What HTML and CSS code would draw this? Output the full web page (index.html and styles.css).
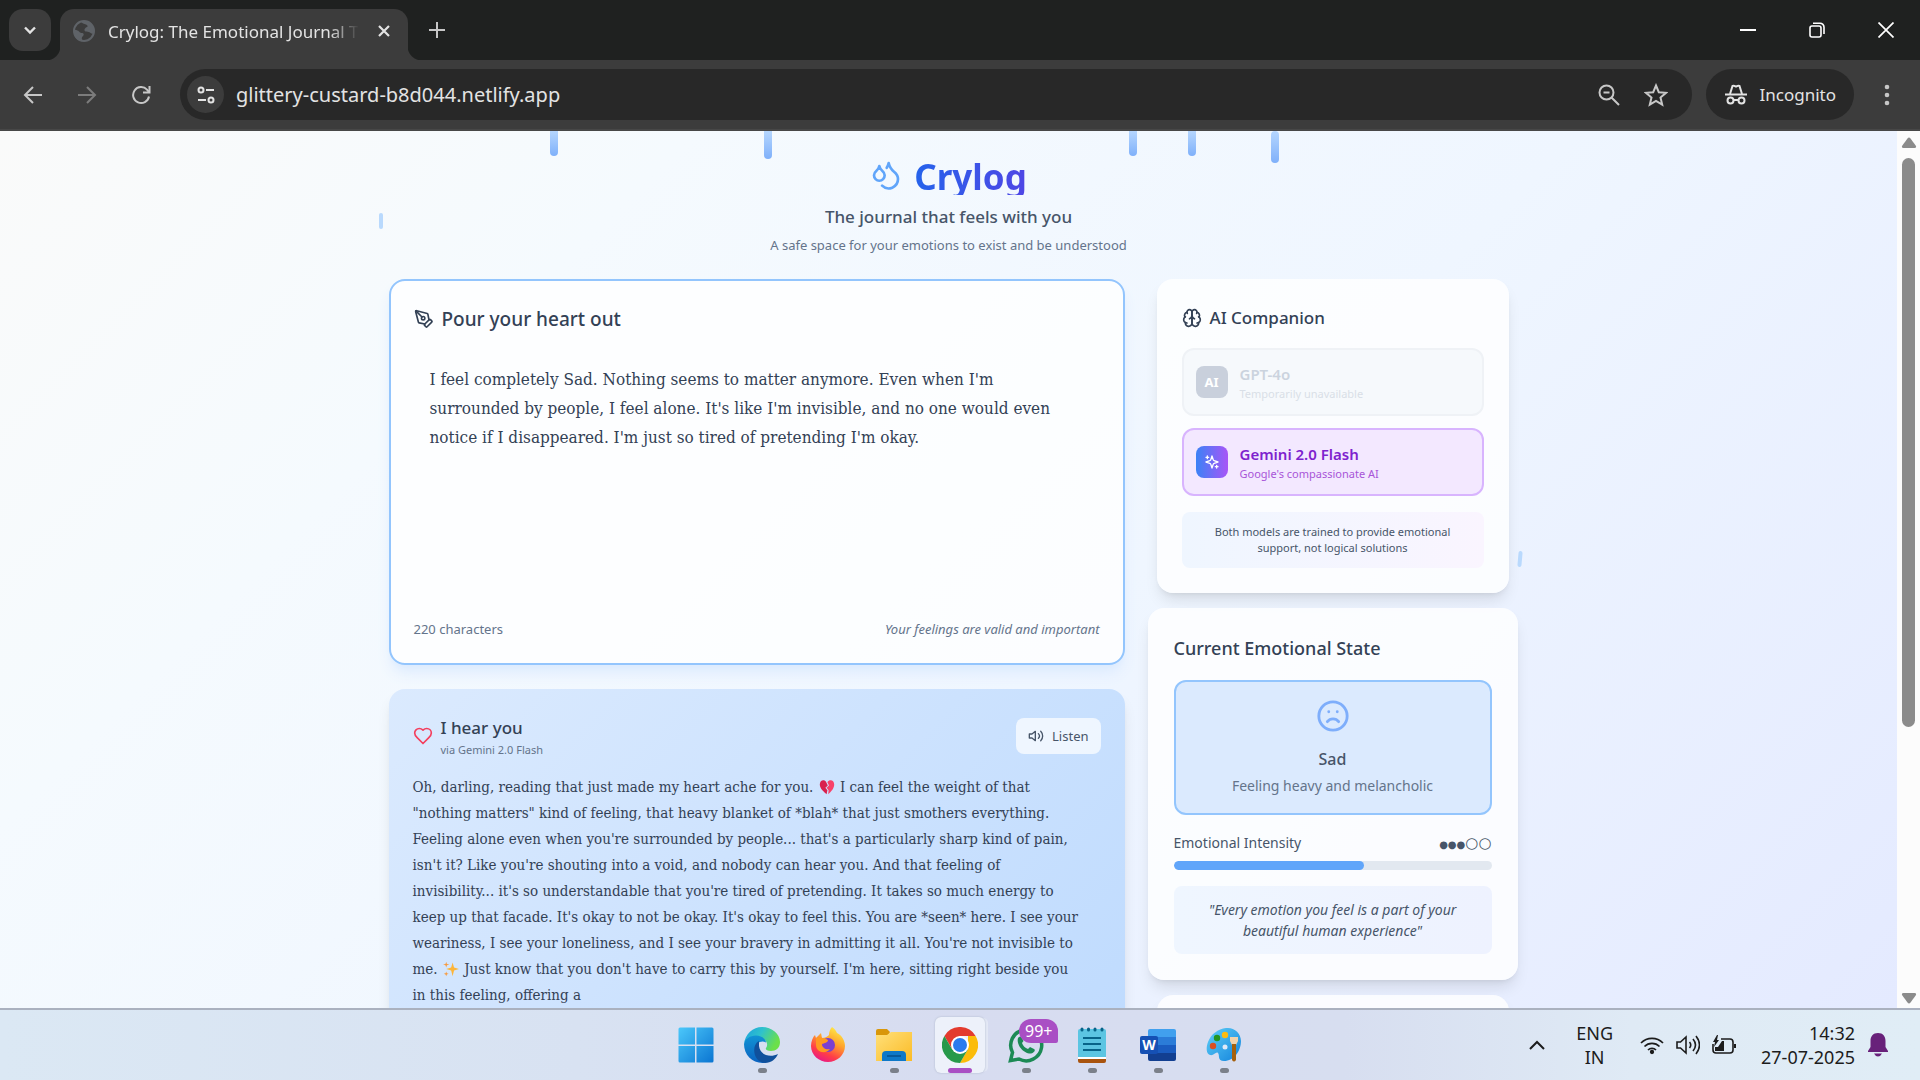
FILE: index.html
```html
<!DOCTYPE html>
<html lang="en">
<head>
    <meta charset="UTF-8">
    <meta name="viewport" content="width=device-width, initial-scale=1.0">
    <title>Crylog: The Emotional Journal That Feels With You</title>
    <link rel="stylesheet" href="styles.css">
</head>
<body>
    <!-- Browser window -->
    <div class="tab-strip">
        <button class="tab-search" aria-label="Search tabs">
            <svg width="16" height="16" viewBox="0 0 16 16" fill="none" stroke="#e3e3e3" stroke-width="2.4"><path d="M3 5.5l5 5 5-5"/></svg>
        </button>
        <div class="tab">
            <svg class="globe" width="22" height="22" viewBox="0 0 22 22"><circle cx="11" cy="11" r="10" fill="#3c3c3c" stroke="#5f6368" stroke-width="2"/><path d="M2 10c2 0 3 .5 4 1.500 1 1.500 2 1.500 3.500 1.500 1.500.5 1.500 2 .5 3-1 .8-1.500 2-1 3.500l.5 2C4 21 0 16 1 10zM8 1.500c5-1.500 11 1 13 7l-.5 5c-2 1-3-1-4.500-1.500-2-.5-4 0-4.500-1.500s1-3 2.500-3.500c1.500-.8 0-2-1-2.500C11 3.500 9 3.500 8 1.500z" fill="#5f6368"/></svg>
            <span class="tab-title">Crylog: The Emotional Journal That Feels</span>
            <button class="tab-close" aria-label="Close tab">
                <svg width="14" height="14" viewBox="0 0 14 14" stroke="#e3e3e3" stroke-width="2.2"><path d="M2 2l10 10M12 2L2 12"/></svg>
            </button>
        </div>
        <button class="new-tab" aria-label="New tab">
            <svg width="18" height="18" viewBox="0 0 18 18" stroke="#c7c7c7" stroke-width="2"><path d="M9 1v16M1 9h16"/></svg>
        </button>
        <div class="window-buttons">
            <button aria-label="Minimize"><svg width="16" height="16" viewBox="0 0 16 16" stroke="#fff" stroke-width="2"><path d="M0 8h16"/></svg></button>
            <button aria-label="Restore"><svg width="16" height="16" viewBox="0 0 16 16" fill="none" stroke="#fff" stroke-width="1.6"><rect x="1" y="4" width="11" height="11" rx="2"/><path d="M4 1.2h7a4 4 0 0 1 4 4V12"/></svg></button>
            <button aria-label="Close"><svg width="16" height="16" viewBox="0 0 16 16" stroke="#fff" stroke-width="1.7"><path d="M.5.5l15 15M15.5.5l-15 15"/></svg></button>
        </div>
    </div>

    <div class="toolbar">
        <button class="nav-btn" aria-label="Back"><svg width="20" height="20" viewBox="0 0 20 20" fill="none" stroke="#c7c7c7" stroke-width="2"><path d="M19 10H2M10 2l-8 8 8 8"/></svg></button>
        <button class="nav-btn" aria-label="Forward"><svg width="20" height="20" viewBox="0 0 20 20" fill="none" stroke="#7c7c7c" stroke-width="2"><path d="M1 10h17M10 2l8 8-8 8"/></svg></button>
        <button class="nav-btn" aria-label="Reload"><svg width="20" height="20" viewBox="0 0 20 20" fill="none" stroke="#c7c7c7" stroke-width="2"><path d="M18 11.5A8 8 0 1 1 16 4.6L18 7"/><path d="M18.5 1v6.500H12"/></svg></button>
        <div class="omnibox">
            <button class="site-info" aria-label="Site information">
                <svg width="20" height="20" viewBox="0 0 20 20" fill="none" stroke="#e3e3e3" stroke-width="2"><circle cx="5" cy="5" r="2.5"/><path d="M10 5h8M2 15h8"/><circle cx="15" cy="15" r="2.5"/></svg>
            </button>
            <input type="text" class="url" aria-label="Address" value="glittery-custard-b8d044.netlify.app">
            <button class="omni-btn" aria-label="Zoom"><svg width="22" height="22" viewBox="0 0 22 22" fill="none" stroke="#c7c7c7" stroke-width="2"><circle cx="8.5" cy="8.5" r="7"/><path d="M13.5 13.5l7.500 7.500M5.500 8.500h6"/></svg></button>
            <button class="omni-btn" aria-label="Bookmark"><svg width="24" height="24" viewBox="0 0 24 24" fill="none" stroke="#c7c7c7" stroke-width="2"><path d="M12 2.500l2.800 6.700 7.200.6-5.500 4.700 1.700 7.100L12 17.800l-6.200 3.800 1.700-7.100L2 9.800l7.200-.6z"/></svg></button>
        </div>
        <button class="incognito">
            <svg width="22" height="22" viewBox="0 0 22 22" fill="none" stroke="#e3e3e3" stroke-width="2"><path d="M0 10.500h22"/><path d="M5 10l2.500-8c2-1 2.500.5 3.500.5s1.500-1.500 3.500-.5L17 10"/><circle cx="5.500" cy="16.500" r="3"/><circle cx="16.500" cy="16.500" r="3"/><path d="M8.500 16h5"/></svg>
            <span>Incognito</span>
        </button>
        <button class="menu-btn" aria-label="Menu"><svg width="6" height="22" viewBox="0 0 6 22" fill="#c7c7c7"><circle cx="3" cy="3" r="2.3"/><circle cx="3" cy="11" r="2.3"/><circle cx="3" cy="19" r="2.3"/></svg></button>
    </div>

    <!-- Page -->
    <div class="viewport">
        <div class="page">
            <div class="rain">
                <span class="drop drop-1"></span>
                <span class="drop drop-2"></span>
                <span class="drop drop-3"></span>
                <span class="drop drop-4"></span>
                <span class="drop drop-5"></span>
                <span class="tear tear-1"></span>
                <span class="tear tear-2"></span>
            </div>

            <header class="hero">
                <div class="logo">
                    <svg class="icon" width="32" height="32" viewBox="0 0 24 24"><path d="M7 16.3c2.2 0 4-1.83 4-4.05 0-1.16-.57-2.26-1.71-3.19S7.29 6.75 7 5.3c-.29 1.45-1.14 2.84-2.29 3.76S3 11.1 3 12.25c0 2.22 1.8 4.05 4 4.05z"/><path d="M12.56 6.6A10.97 10.97 0 0 0 14 3.02c.5 2.5 2 4.9 4 6.5s3 3.5 3 5.5a6.98 6.98 0 0 1-11.91 4.97"/></svg>
                    <h1>Crylog</h1>
                </div>
                <p class="subtitle">The journal that feels with you</p>
                <p class="tagline">A safe space for your emotions to exist and be understood</p>
            </header>

            <div class="layout">
                <main class="main-col">
                    <section class="card journal">
                        <label class="card-title title-lg" for="entry">
                            <svg class="icon" width="20" height="20" viewBox="0 0 24 24"><path d="M15.707 21.293a1 1 0 0 1-1.414 0l-1.586-1.586a1 1 0 0 1 0-1.414l5.586-5.586a1 1 0 0 1 1.414 0l1.586 1.586a1 1 0 0 1 0 1.414z"/><path d="m18 13-1.375-6.874a1 1 0 0 0-.746-.776L3.235 2.028a1 1 0 0 0-1.207 1.207L5.35 15.879a1 1 0 0 0 .776.746L13 18"/><path d="m2.3 2.3 7.286 7.286"/><circle cx="11" cy="11" r="2"/></svg>
                            Pour your heart out
                        </label>
                        <textarea id="entry">I feel completely Sad. Nothing seems to matter anymore. Even when I'm surrounded by people, I feel alone. It's like I'm invisible, and no one would even notice if I disappeared. I'm just so tired of pretending I'm okay.</textarea>
                        <div class="journal-foot">
                            <span>220 characters</span>
                            <em>Your feelings are valid and important</em>
                        </div>
                    </section>

                    <section class="card reply">
                        <div class="reply-head">
                            <svg class="icon heart" width="20" height="20" viewBox="0 0 24 24"><path d="M19 14c1.49-1.46 3-3.21 3-5.5A5.5 5.5 0 0 0 16.5 3c-1.76 0-3 .5-4.5 2-1.5-1.5-2.74-2-4.5-2A5.5 5.5 0 0 0 2 8.5c0 2.3 1.5 4.05 3 5.5l7 7Z"/></svg>
                            <div>
                                <h2>I hear you</h2>
                                <p>via Gemini 2.0 Flash</p>
                            </div>
                            <button class="listen">
                                <svg class="icon" width="16" height="16" viewBox="0 0 24 24"><path d="M11 5 6 9H2v6h4l5 4z"/><path d="M15.54 8.46a5 5 0 0 1 0 7.07"/><path d="M19.07 4.93a10 10 0 0 1 0 14.14"/></svg>
                                Listen
                            </button>
                        </div>
                        <p class="reply-text">Oh, darling, reading that just made my heart ache for you. <svg class="emoji" viewBox="0 0 20 20"><path d="M9 4C7 0 1 1 1 7c0 5 5 9 8.500 12l1-5-2.500-3 3-3z" fill="#d9214e"/><path d="M10.500 4C13 0 19 1 19 7c0 5-4 9-7.500 12l.5-5-2.500-3 3-3z" fill="#f8426a"/></svg> I can feel the weight of that "nothing matters" kind of feeling, that heavy blanket of *blah* that just smothers everything. Feeling alone even when you're surrounded by people... that's a particularly sharp kind of pain, isn't it? Like you're shouting into a void, and nobody can hear you. And that feeling of invisibility... it's so understandable that you're tired of pretending. It takes so much energy to keep up that facade. It's okay to not be okay. It's okay to feel this. You are *seen* here. I see your weariness, I see your loneliness, and I see your bravery in admitting it all. You're not invisible to me. <svg class="emoji" viewBox="0 0 20 20"><path d="M12 2l1.800 6.200L20 10l-6.200 1.800L12 19l-1.800-7.200L4 10l6.200-1.800z" fill="#fcb53a"/><path d="M4 1l.9 2.600L8 4.500l-3.100.9L4 8l-.9-2.600L0 4.500l3.100-.9zM4 13l.8 2.200L7 16l-2.200.8L4 19l-.8-2.200L1 16l2.200-.8z" fill="#f79a3e"/></svg> Just know that you don't have to carry this by yourself. I'm here, sitting right beside you in this feeling, offering a</p>
                    </section>
                </main>

                <aside class="side-col">
                    <section class="card">
                        <h2 class="card-title">
                            <svg class="icon" width="20" height="20" viewBox="0 0 24 24"><path d="M12 5a3 3 0 1 0-5.997.125 4 4 0 0 0-2.526 5.77 4 4 0 0 0 .556 6.588A4 4 0 1 0 12 18Z"/><path d="M12 5a3 3 0 1 1 5.997.125 4 4 0 0 1 2.526 5.77 4 4 0 0 1-.556 6.588A4 4 0 1 1 12 18Z"/><path d="M15 13a4.5 4.5 0 0 1-3-4 4.5 4.5 0 0 1-3 4"/><path d="M17.599 6.5a3 3 0 0 0 .399-1.375M6.003 5.125A3 3 0 0 0 6.401 6.5M3.477 10.896a4 4 0 0 1 .585-.396M19.938 10.5a4 4 0 0 1 .585.396M6 18a4 4 0 0 1-1.967-.516M19.967 17.484A4 4 0 0 1 18 18"/></svg>
                            AI Companion
                        </h2>
                        <div class="models">
                            <button class="model model-off" disabled>
                                <span class="tile">AI</span>
                                <span class="model-text"><strong>GPT-4o</strong><small>Temporarily unavailable</small></span>
                            </button>
                            <button class="model model-on">
                                <span class="tile"><svg class="icon" width="16" height="16" viewBox="0 0 24 24"><path d="m12 3-1.912 5.813a2 2 0 0 1-1.275 1.275L3 12l5.813 1.912a2 2 0 0 1 1.275 1.275L12 21l1.912-5.813a2 2 0 0 1 1.275-1.275L21 12l-5.813-1.912a2 2 0 0 1-1.275-1.275L12 3Z"/><path d="M5 3v4M19 17v4M3 5h4M17 19h4"/></svg></span>
                                <span class="model-text"><strong>Gemini 2.0 Flash</strong><small>Google's compassionate AI</small></span>
                            </button>
                        </div>
                        <p class="note">Both models are trained to provide emotional support, not logical solutions</p>
                    </section>

                    <section class="card mood-card">
                        <h2 class="card-title">Current Emotional State</h2>
                        <div class="mood">
                            <svg class="icon" width="34" height="34" viewBox="0 0 24 24"><circle cx="12" cy="12" r="10"/><path d="M16 16s-1.5-2-4-2-4 2-4 2M9 9h.01M15 9h.01"/></svg>
                            <h3>Sad</h3>
                            <p>Feeling heavy and melancholic</p>
                        </div>
                        <div class="intensity">
                            <span>Emotional Intensity</span>
                            <span class="dots"><span class="dots-on">●●●</span>○○</span>
                        </div>
                        <div class="bar"><div class="bar-fill" style="width: 60%"></div></div>
                        <p class="quote">"Every emotion you feel is a part of your beautiful human experience"</p>
                    </section>

                    <section class="card next-card"></section>
                </aside>
            </div>
        </div>
        <div class="scrollbar">
            <svg width="16" height="12" viewBox="0 0 16 12" fill="#8b8b8b"><path d="M6.500 1.500q1.500-2 3 0L15 9q.5 2-1.500 2h-11Q.5 11 1 9z"/></svg>
            <div class="scroll-track"><div class="thumb"></div></div>
            <svg width="16" height="12" viewBox="0 0 16 12" fill="#8b8b8b"><path d="M6.500 10.500q1.500 2 3 0L15 3q.5-2-1.500-2h-11Q.5 1 1 3z"/></svg>
        </div>
    </div>

    <!-- Taskbar -->
    <footer class="taskbar">
        <div class="apps">
            <button class="app" aria-label="Start">
                <svg width="36" height="36" viewBox="0 0 36 36"><defs><linearGradient id="win" gradientUnits="userSpaceOnUse" x1="0" y1="0" x2="36" y2="36"><stop offset="0" stop-color="#4cc9fb"/><stop offset="1" stop-color="#0a74d1"/></linearGradient></defs><path fill="url(#win)" d="M2 .5h15v17H.5V2Q.5.5 2 .5zM18.500.5H34q1.500 0 1.500 1.500v15.500h-17zM.5 19H17v16.500H2Q.5 35.500.5 34zM18.500 19h17v15q0 1.500-1.500 1.500H18.500z"/></svg>
            </button>
            <button class="app running" aria-label="Edge">
                <svg width="36" height="36" viewBox="0 0 36 36"><defs><linearGradient id="edge-a" x1="0" y1="0" x2="1" y2=".4"><stop offset="0" stop-color="#1a9fe0"/><stop offset=".5" stop-color="#2fc2cc"/><stop offset="1" stop-color="#6be04a"/></linearGradient><linearGradient id="edge-b" x1="0" y1="0" x2="0" y2="1"><stop offset="0" stop-color="#1193d4"/><stop offset="1" stop-color="#0b62c0"/></linearGradient></defs><path fill="url(#edge-a)" d="M0 17C1 7 9 0 18 0c10 0 18 7 18 15 0 6-4 9-9 9-4 0-6-1.500-5-3 3-4 0-10-8-11C7 9.500 1 13 0 17z"/><path fill="url(#edge-b)" d="M0 17c1-5 6-8.500 12-8.500 6 0 10 4 10 7-6-3-12 2-10 9 1 6 6 11 11 11C10 38 0 29 0 17z"/><path fill="#10509c" d="M15 14c-8 4-6 21 6 22 6 0 11-4 13-9-8 4-18 1-19-8z"/></svg>
            </button>
            <button class="app" aria-label="Firefox">
                <svg width="36" height="36" viewBox="0 0 36 36"><defs><linearGradient id="fox" x1=".8" y1="0" x2=".3" y2="1"><stop offset="0" stop-color="#fff24a"/><stop offset=".4" stop-color="#ffa42c"/><stop offset=".75" stop-color="#ff3e47"/><stop offset="1" stop-color="#e8178a"/></linearGradient></defs><path fill="url(#fox)" d="M22 0c3 2 4 4 5 6 5 2 8 8 8 13 0 9-8 16-17 16S1 28 1 19c0-5 2-9 4-11l1 3 5-5 1 5c3 0 5-1 7-3 0-3 1-6 3-8z"/><circle cx="18" cy="18" r="7" fill="#7b3fd0"/><path fill="#ff9a20" d="M6 11c4-1 9 0 12 2 0 3-4 3-6 4 0 4 4 6 8 5-5 6-14 3-14-4z"/></svg>
            </button>
            <button class="app running" aria-label="File Explorer">
                <svg width="36" height="36" viewBox="0 0 36 36"><path fill="#d9970a" d="M0 4q0-2 2-2h9l3 3-3 5H0z"/><defs><linearGradient id="folder" x1="0" y1="0" x2="1" y2="1"><stop offset="0" stop-color="#ffe07a"/><stop offset="1" stop-color="#fbbb26"/></linearGradient></defs><path fill="url(#folder)" d="M0 8h11l4-3h21v29H0z"/><path fill="#0e78c8" d="M6 34V28q0-4 4-4h16q4 0 4 4v6z"/><path stroke="#064f8c" stroke-width="1.5" d="M11 29h14"/></svg>
            </button>
            <button class="app active" aria-label="Chrome">
                <svg width="36" height="36" viewBox="0 0 36 36"><path fill="#e33b2e" d="M2.400 9a18 18 0 0 1 31.200 0H18l-6 3-2 10z"/><path fill="#fbbc0a" d="M33.600 9A18 18 0 0 1 18 36l8-14V9z"/><path fill="#26994a" d="M2.400 9A18 18 0 0 0 18 36l7.800-13.500H10.200z"/><circle cx="18" cy="18" r="9" fill="#fff"/><circle cx="18" cy="18" r="7" fill="#2a7bee"/></svg>
            </button>
            <button class="app running" aria-label="WhatsApp">
                <svg width="36" height="36" viewBox="0 0 36 36"><path fill="none" stroke="#1c8a55" stroke-width="3.5" d="M2.500 33.500l2-8a15.500 15.500 0 1 1 6.500 6.500z"/><path fill="#1c8a55" d="M10 11c2-2 3-2 4 0l1.500 3-1.500 2c1 3 3 5 6 6l2-2 4 2c2 1 0 4-3 4.500C16 27 8 18 10 11z"/></svg>
                <span class="badge">99+</span>
            </button>
            <button class="app running" aria-label="Notepad">
                <svg width="36" height="36" viewBox="0 0 36 36"><path fill="#a9540f" d="M4 32h28v2q0 2-2 2H6q-2 0-2-2z"/><path fill="#fff" d="M4 29h28v3H4z"/><path fill="#5cc5e2" d="M6 2h24q2 0 2 2v26H4V4q0-2 2-2z"/><path stroke="#086489" stroke-width="2" d="M9 11h18M9 17h18M9 23h18"/><path stroke="#086489" stroke-width="3" stroke-linecap="round" d="M8 2v1M14.500 2v1M21 2v1M28 2v1"/></svg>
            </button>
            <button class="app running" aria-label="Word">
                <svg width="36" height="36" viewBox="0 0 36 36"><path fill="#41a0ee" d="M10 2h24q2 0 2 2v6H8V4q0-2 2-2z"/><path fill="#2b7cd8" d="M8 10h28v8H8z"/><path fill="#1a5cc0" d="M8 18h28v8H8z"/><path fill="#123f91" d="M8 26h28v6q0 2-2 2H10q-2 0-2-2z"/><rect y="9" width="18" height="18" rx="2" fill="#1550b4"/><text x="9" y="23" text-anchor="middle" class="word-w">W</text></svg>
            </button>
            <button class="app running" aria-label="Paint">
                <svg width="36" height="36" viewBox="0 0 36 36"><defs><linearGradient id="paint" x1="0" y1="0" x2="1" y2="1"><stop offset="0" stop-color="#5fd0f8"/><stop offset="1" stop-color="#1383dc"/></linearGradient></defs><path fill="url(#paint)" d="M20 1c8-1 15 5 15 13 0 10-7 20-17 20-7 0-4-6-6-8s-4 3-8 2-4-8-2-13C5 7 12 2 20 1z"/><circle cx="19" cy="20" r="2.5" fill="#dfe9f8"/><circle cx="7" cy="19" r="3.2" fill="#da4f22"/><circle cx="11" cy="11" r="3.2" fill="#23961f"/><circle cx="19" cy="8" r="3.2" fill="#fdbc12"/><path fill="#f0d3ac" d="M24 10h8v4l-2 4h-4l-2-4z"/><path fill="#a5610e" d="M26 17h4v16q-2 3-4 0z"/></svg>
            </button>
        </div>
        <div class="tray">
            <svg width="16" height="10" viewBox="0 0 16 10" fill="none" stroke="#1c1c1c" stroke-width="2"><path d="M1 9l7-7 7 7"/></svg>
            <div class="lang">ENG<br>IN</div>
            <div class="status">
                <svg width="24" height="20" viewBox="0 0 24 20" fill="none" stroke="#1c1c1c" stroke-width="1.7"><path d="M1 8a15.500 15.500 0 0 1 22 0M4.500 11.500a10.500 10.500 0 0 1 15 0M8 15a5.700 5.700 0 0 1 8 0"/><circle cx="12" cy="17" r="1.3" fill="#1c1c1c"/></svg>
                <svg width="24" height="20" viewBox="0 0 24 20" fill="none" stroke="#1c1c1c" stroke-width="1.6"><path d="M1 7h3.500L10 2v16l-5.500-5H1zM13.500 7q2.500 3 0 6M17 4q5 6 0 12M20 1q7 9 0 18"/></svg>
                <svg width="24" height="20" viewBox="0 0 24 20" fill="none" stroke="#1c1c1c" stroke-width="1.6"><path d="M9 4h9q3 0 3 3v8q0 3-3 3H4q-3 0-3-3V9"/><path d="M3 16v-4h3l4-6h2v10z" fill="#1c1c1c" stroke="none"/><path d="M5 0L1 7h2l-1 5 5-7H5l1-5zM22 9h2v4h-2z" fill="#1c1c1c" stroke="none"/></svg>
            </div>
            <div class="clock">14:32<br>27-07-2025</div>
            <svg width="20" height="24" viewBox="0 0 20 24" fill="#68217a"><path d="M10 0c5 0 7.500 3.500 7.500 8v6l2.500 4v1H0v-1l2.500-4V8C2.500 3.500 5 0 10 0zM6 20.500h8q-1.500 3-4 3t-4-3z"/></svg>
        </div>
    </footer>
</body>
</html>
```
FILE: styles.css
```css
* {
    box-sizing: border-box;
}

body {
    margin: 0;
    height: 100vh;
    display: flex;
    flex-direction: column;
    overflow: hidden;
    font-family: "Segoe UI", "Noto Sans", "Open Sans", sans-serif;
    color: #334155;
}

h1, h2, h3, p {
    margin: 0;
}

button {
    font-family: inherit;
    border: none;
    background: none;
    padding: 0;
    cursor: pointer;
    color: inherit;
}

svg {
    display: block;
    flex-shrink: 0;
}

.icon {
    fill: none;
    stroke: currentColor;
    stroke-width: 2;
    stroke-linecap: round;
    stroke-linejoin: round;
}

/* browser window */

.tab-strip {
    display: flex;
    flex-shrink: 0;
    height: 60px;
    padding-left: 9px;
    background-color: #1f2120;
}

.tab-search {
    display: flex;
    align-items: center;
    justify-content: center;
    width: 42px;
    height: 42px;
    margin-top: 9px;
    border-radius: 14px;
    background-color: #3c3c3c;
}

.tab {
    position: relative;
    display: flex;
    align-items: center;
    width: 348px;
    margin: 9px 0 0 9px;
    padding: 0 17px 8px 13px;
    border-radius: 14px 14px 0 0;
    background-color: #3c3c3c;
}

.tab::before,
.tab::after {
    content: "";
    position: absolute;
    bottom: 0;
    width: 14px;
    height: 14px;
}

.tab::before {
    right: 100%;
    background: radial-gradient(circle at 0 0, transparent 14px, #3c3c3c 15px);
}

.tab::after {
    left: 100%;
    background: radial-gradient(circle at 100% 0, transparent 14px, #3c3c3c 15px);
}

.tab-title {
    flex: 1;
    margin: 2px 18px 0 13px;
    overflow: hidden;
    white-space: nowrap;
    font-size: 17px;
    color: #e3e3e3;
    -webkit-mask-image: linear-gradient(90deg, #000 88%, transparent);
    mask-image: linear-gradient(90deg, #000 88%, transparent);
}

.new-tab {
    margin-left: 20px;
}

.window-buttons {
    display: flex;
    margin-left: auto;
}

.window-buttons button {
    display: flex;
    align-items: center;
    justify-content: center;
    width: 69px;
}

.toolbar {
    display: flex;
    align-items: center;
    flex-shrink: 0;
    height: 71px;
    padding: 0 30px 0 12px;
    border-bottom: 2px solid #474747;
    background-color: #3c3c3c;
}

.nav-btn {
    display: flex;
    align-items: center;
    justify-content: center;
    width: 42px;
    height: 42px;
    margin-right: 12px;
}

.omnibox {
    display: flex;
    flex: 1;
    align-items: center;
    height: 51px;
    margin-left: 6px;
    padding: 0 24px 0 7px;
    border-radius: 26px;
    background-color: #282828;
}

.site-info {
    display: flex;
    align-items: center;
    justify-content: center;
    width: 37px;
    height: 37px;
    border-radius: 50%;
    background-color: #3c3c3c;
}

.url {
    flex: 1;
    padding: 0 12px;
    border: none;
    outline: none;
    background: none;
    font-family: inherit;
    font-size: 20px;
    color: #e3e3e3;
}

.omni-btn {
    margin-left: 24px;
}

.incognito {
    display: flex;
    align-items: center;
    gap: 13px;
    height: 51px;
    margin: 0 30px 0 14px;
    padding: 0 18px 0 19px;
    border-radius: 26px;
    background-color: #282828;
    font-size: 17px;
    color: #e3e3e3;
}

/* page */

.viewport {
    display: flex;
    flex: 1;
    min-height: 0;
}

.page {
    position: relative;
    flex: 1;
    overflow: hidden;
    padding: 24px 24px 0;
    background: linear-gradient(135deg, #fafafa 0%, #f5fafe 25%, #eff6ff 57%, #e4eaff 100%);
}

.scrollbar {
    display: flex;
    flex-direction: column;
    align-items: center;
    gap: 9px;
    width: 23px;
    padding: 6px 0 4px;
    background-color: #fcfcfc;
}

.scroll-track {
    flex: 1;
}

.thumb {
    width: 13px;
    height: 69%;
    border-radius: 7px;
    background-color: #8b8b8b;
}

.drop {
    position: absolute;
    top: 0;
    width: 8px;
    height: 25px;
    border-radius: 0 0 4px 4px;
    background: linear-gradient(#b5d6fe, #7fb0fa);
}

.drop-1 { left: 29%; }
.drop-2 { left: 40.3%; height: 28px; }
.drop-3 { left: 59.5%; }
.drop-4 { left: 62.6%; }
.drop-5 { left: 67%; height: 32px; border-radius: 4px; }

.tear {
    position: absolute;
    width: 4px;
    height: 16px;
    border-radius: 2px;
    background-color: #b9d9fd;
}

.tear-1 { top: 82px; left: 20%; }
.tear-2 { top: 420px; left: 80%; transform: rotate(5deg); }

.hero {
    display: flex;
    flex-direction: column;
    align-items: center;
    margin-bottom: 24px;
    text-align: center;
}

.logo {
    display: flex;
    align-items: center;
    gap: 12px;
    margin-bottom: 8px;
    color: #60a5fa;
}

.logo h1 {
    height: 40px;
    font-size: 35px;
    line-height: 44px;
    font-weight: 700;
    color: transparent;
    background: linear-gradient(90deg, #2563eb, #4f46e5);
    -webkit-background-clip: text;
    background-clip: text;
}

.subtitle {
    margin-bottom: 4px;
    font-size: 17px;
    line-height: 28px;
    font-weight: 500;
    color: #475569;
}

.tagline {
    font-size: 13px;
    line-height: 20px;
    color: #64748b;
}

.layout {
    display: grid;
    grid-template-columns: repeat(3, 1fr);
    gap: 32px;
    max-width: 1120px;
    margin: 0 auto;
}

.main-col {
    display: flex;
    flex-direction: column;
    gap: 24px;
    grid-column: span 2;
}

.side-col {
    display: flex;
    flex-direction: column;
    gap: 24px;
}

.card {
    padding: 25px;
    border-radius: 16px;
    background-color: rgba(255, 255, 255, 0.8);
    box-shadow: 0 10px 15px -3px rgba(0, 0, 0, 0.1), 0 4px 6px -4px rgba(0, 0, 0, 0.1);
}

.card-title {
    display: flex;
    align-items: center;
    gap: 8px;
    margin-bottom: 16px;
    font-size: 17px;
    line-height: 28px;
    font-weight: 500;
}

.title-lg {
    font-size: 19px;
}

.journal {
    padding: 24px 23px;
    border: 2px solid #93c5fd;
    box-shadow: 0 10px 15px -3px #dbeafe, 0 4px 6px -4px #dbeafe;
}

.journal textarea {
    display: block;
    width: 100%;
    height: 254px;
    padding: 16px;
    border: none;
    outline: none;
    resize: none;
    background: none;
    font-family: Georgia, "DejaVu Serif Condensed", "Liberation Serif", serif;
    font-size: 17px;
    line-height: 29px;
    color: #334155;
}

.journal-foot {
    display: flex;
    justify-content: space-between;
    margin-top: 16px;
    font-size: 13px;
    line-height: 20px;
    color: #64748b;
}

.reply {
    padding: 25px 24px;
    background: linear-gradient(135deg, #dbeafe, #bfdbfe);
}

.reply-head {
    display: flex;
    align-items: center;
    gap: 8px;
    margin-bottom: 16px;
}

.heart {
    color: #f43f5e;
}

.reply-head h2 {
    font-size: 17px;
    line-height: 28px;
    font-weight: 500;
}

.reply-head p {
    font-size: 11px;
    line-height: 16px;
    color: #64748b;
}

.listen {
    display: flex;
    align-items: center;
    gap: 8px;
    margin-left: auto;
    padding: 8px 12px;
    border-radius: 8px;
    background-color: rgba(255, 255, 255, 0.7);
    font-size: 13px;
    line-height: 20px;
    color: #475569;
}

.reply-text {
    padding-right: 16px;
    font-family: Georgia, "DejaVu Serif Condensed", "Liberation Serif", serif;
    font-size: 15px;
    line-height: 26px;
}

.emoji {
    display: inline-block;
    width: 18px;
    height: 16px;
    vertical-align: -3px;
}

.models {
    display: flex;
    flex-direction: column;
    gap: 12px;
}

.model {
    display: flex;
    align-items: center;
    gap: 12px;
    padding: 12px;
    border: 2px solid;
    border-radius: 12px;
    text-align: left;
}

.model-off {
    border-color: #eff2f6;
    background-color: #f6f9fc;
    color: #cbd3de;
}

.model-on {
    border-color: #d8b4fe;
    background-color: #f3e8ff;
    color: #7e22ce;
}

.tile {
    display: flex;
    align-items: center;
    justify-content: center;
    width: 32px;
    height: 32px;
    border-radius: 8px;
    font-size: 13px;
    font-weight: 700;
    color: #fff;
}

.model-off .tile {
    background-color: #c9d0dc;
}

.model-on .tile {
    background: linear-gradient(90deg, #3b82f6, #a855f7);
}

.model-text strong {
    display: block;
    font-size: 15px;
    line-height: 24px;
    font-weight: 600;
}

.model-text small {
    display: block;
    font-size: 11px;
    line-height: 16px;
}

.model-off small {
    color: #d9dfe7;
}

.model-on small {
    color: #a855d8;
}

.note {
    margin-top: 16px;
    padding: 12px;
    border-radius: 8px;
    background: linear-gradient(90deg, #eff6ff, #faf5ff);
    font-size: 11px;
    line-height: 16px;
    text-align: center;
    color: #475569;
}

/* highlighted card, a bit wider than the column */
.mood-card {
    margin: -9px;
    padding: 26px;
}

.mood-card .card-title {
    margin-bottom: 18px;
    font-size: 18px;
}

.mood {
    display: flex;
    flex-direction: column;
    align-items: center;
    padding: 17px;
    border: 2px solid #93c5fd;
    border-radius: 12px;
    background-color: #dbeafe;
}

.mood .icon {
    color: #7eaefb;
}

.mood h3 {
    margin: 14px 0 3px;
    font-size: 16px;
    line-height: 25px;
    font-weight: 500;
    color: #475569;
}

.mood p {
    font-size: 14px;
    line-height: 21px;
    color: #64748b;
}

.intensity {
    display: flex;
    justify-content: space-between;
    margin: 18px 0 6px;
    font-size: 14px;
    line-height: 20px;
    color: #475569;
}

.dots {
    font-family: "DejaVu Sans", sans-serif;
    font-size: 15px;
}

.dots-on {
    font-size: 10px;
}

.bar {
    height: 9px;
    border-radius: 5px;
    overflow: hidden;
    background-color: #e2e8f0;
}

.bar-fill {
    height: 100%;
    border-radius: 5px;
    background-color: #60a5fa;
}

.quote {
    margin-top: 16px;
    padding: 13px;
    border-radius: 8px;
    background: linear-gradient(90deg, #eff6ff, #eef2ff);
    font-size: 14px;
    line-height: 21px;
    font-style: italic;
    text-align: center;
    color: #475569;
}

.next-card {
    height: 200px;
}

/* taskbar */

.taskbar {
    display: grid;
    grid-template-columns: 1fr auto 1fr;
    flex-shrink: 0;
    height: 72px;
    border-top: 2px solid #aab1bf;
    background: linear-gradient(90deg, #dbe8f4 0%, #d8e2f2 30%, #d7dcf0 50%, #d7def0 70%, #dfeaf5 85%, #e0edf6 100%);
}

.apps {
    display: flex;
    grid-column: 2;
    align-items: center;
    gap: 16px;
}

.app {
    position: relative;
    display: flex;
    align-items: center;
    justify-content: center;
    width: 50px;
    height: 56px;
    border-radius: 6px;
}

.active {
    background-color: #edf1fa;
    box-shadow: 0 0 2px #a9b2c6, 4px 0 0 -1px #e3e8f5;
}

.running::after,
.active::after {
    content: "";
    position: absolute;
    bottom: 0;
    width: 9px;
    height: 5px;
    border-radius: 3px;
    background-color: #7b808a;
}

.active::after {
    width: 24px;
    background-color: #a94fc4;
}

.badge {
    position: absolute;
    top: 2px;
    left: 18px;
    padding: 0 6px;
    border-radius: 12px 12px 2px 12px;
    background-color: #a94fc4;
    font-size: 16px;
    line-height: 24px;
    color: #fff;
}

.word-w {
    font: 700 14px "Open Sans", sans-serif;
    fill: #fff;
}

.tray {
    display: flex;
    align-items: center;
    justify-content: flex-end;
    padding-right: 32px;
    font-size: 18px;
    line-height: 24px;
    color: #1c1c1c;
}

.lang {
    margin: 0 27px 0 31px;
    text-align: center;
}

.status {
    display: flex;
    gap: 12px;
}

.clock {
    margin: 0 13px 0 25px;
    text-align: right;
}
```
